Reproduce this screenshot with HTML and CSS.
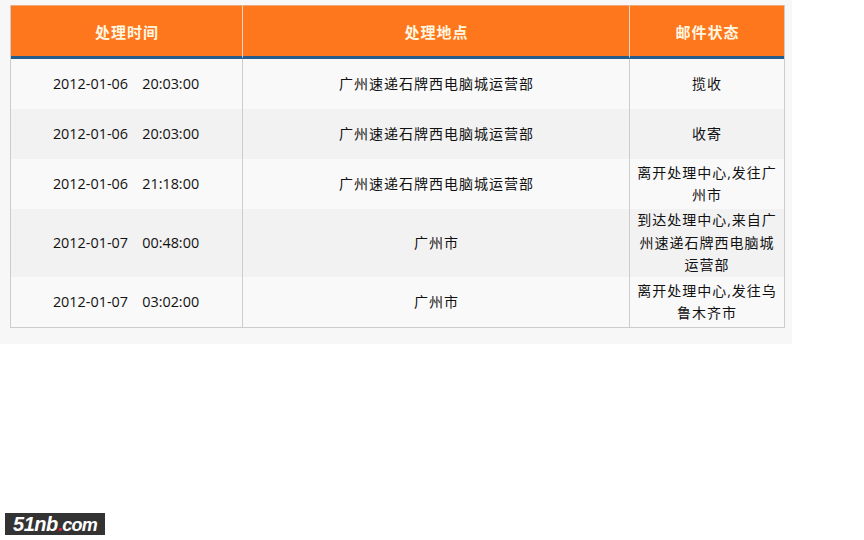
FILE: index.html
```html
<!DOCTYPE html>
<html lang="zh">
<head>
<meta charset="utf-8">
<title>邮件跟踪</title>
<link rel="stylesheet" href="styles.css">
</head>
<body>
<div class="panel">
  <table class="track">
    <colgroup><col class="c1"><col class="c2"><col class="c3"></colgroup>
    <thead>
      <tr><th>处理时间</th><th>处理地点</th><th>邮件状态</th></tr>
    </thead>
    <tbody>
      <tr class="r50"><td class="date">2012-01-06 &nbsp; 20:03:00</td><td>广州速递石牌西电脑城运营部</td><td>揽收</td></tr>
      <tr class="r50 alt"><td class="date">2012-01-06 &nbsp; 20:03:00</td><td>广州速递石牌西电脑城运营部</td><td>收寄</td></tr>
      <tr class="r50"><td class="date">2012-01-06 &nbsp; 21:18:00</td><td>广州速递石牌西电脑城运营部</td><td>离开处理中心,发往广州市</td></tr>
      <tr class="r68 alt"><td class="date">2012-01-07 &nbsp; 00:48:00</td><td>广州市</td><td>到达处理中心,来自广州速递石牌西电脑城运营部</td></tr>
      <tr class="r50"><td class="date">2012-01-07 &nbsp; 03:02:00</td><td>广州市</td><td>离开处理中心,发往乌鲁木齐市</td></tr>
    </tbody>
  </table>
</div>
<div class="logo"><span class="brand">51nb</span><span class="dot">.</span><span class="tld">com</span></div>
</body>
</html>
```
FILE: styles.css
```css
html, body { margin: 0; padding: 0; background: #fff; }
body { width: 864px; height: 540px; overflow: hidden; font-family: "Open Sans", "Noto Sans CJK SC", sans-serif; }
.panel { width: 792px; height: 344px; box-sizing: border-box; padding: 5px 7px 0 10px; background: #f7f7f7; }
.track { width: 775px; border-collapse: separate; border-spacing: 0; table-layout: fixed; font-size: 14px; color: #111; border-right: 1px solid #ccc; border-left: 1px solid #ccc; border-bottom: 1px solid #ccc; box-sizing: border-box; }
.c1 { width: 232px; }
.c2 { width: 387px; }
.c3 { width: 154px; }
.track th { height: 50px; padding: 0 0 0 1px; background: #ff771c; color: #fff6e0; font-size: 15px; font-weight: bold; letter-spacing: 1px; border-top: 1px solid #f0a878; border-right: 1px solid #ecd9c6; border-bottom: 3px solid #245c8e; box-sizing: content-box; }
.track th:last-child { border-right: 0; }
.track td { padding: 0 7px 0 8px; text-align: center; line-height: 22.5px; letter-spacing: 1px; border-right: 1px solid #ccc; background: #f9f9f9; }
.track td:last-child { border-right: 0; padding: 0 7px; }
.track .date { font-size: 14.4px; letter-spacing: 0; word-spacing: 1px; padding: 0 1px 0 0; }
.r50 td { height: 50px; }
.r68 td { height: 68px; }
.track .alt td { background: #f2f2f2; }
.logo { width: 100px; height: 22px; margin: 169px 0 0 5px; background: #333; color: #fff; font-family: "Liberation Sans", sans-serif; font-style: italic; line-height: 22px; text-align: center; white-space: nowrap; }
.brand { font-size: 20px; font-weight: bold; letter-spacing: -0.5px; }
.dot { font-size: 20px; font-weight: bold; color: #d8263c; letter-spacing: -1px; }
.tld { font-size: 18px; font-weight: bold; letter-spacing: -0.8px; }
```
